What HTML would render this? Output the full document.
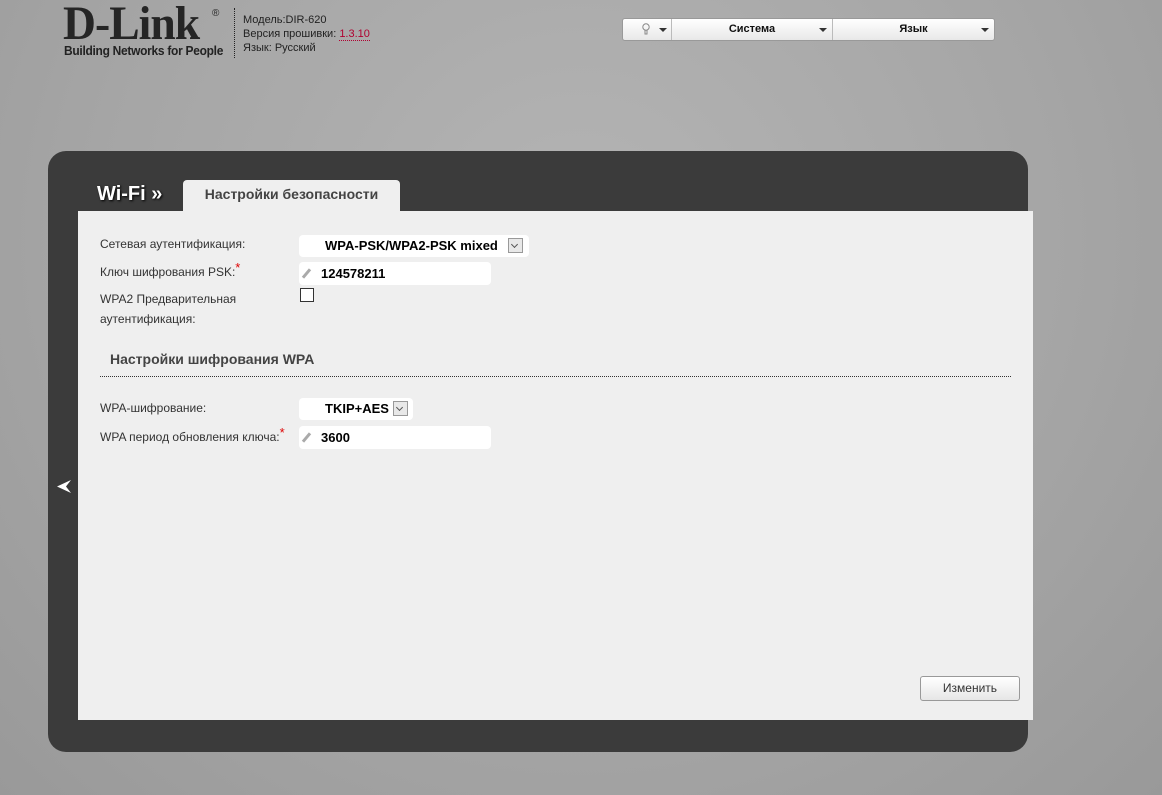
<!DOCTYPE html>
<html><head><meta charset="utf-8"><style>
body{margin:0;width:1162px;height:795px;overflow:hidden;background:radial-gradient(ellipse at 50% 30%,#b4b4b4 0%,#a5a5a5 60%,#999 100%);font-family:"Liberation Sans",sans-serif;position:relative}
.abs{position:absolute}
.logo{left:63px;top:2px;font-family:"Liberation Serif",serif;font-weight:bold;font-size:48px;letter-spacing:-1px;color:#252525;line-height:44px;transform:scaleX(0.95);transform-origin:left}
.tag{left:64px;top:43px;font-size:13px;font-weight:bold;color:#222;letter-spacing:-0.3px;transform:scaleX(0.92);transform-origin:left;white-space:nowrap}
.info{left:243px;top:13px;font-size:11px;color:#222;line-height:14px}
.sep{left:234px;top:8px;height:50px;border-left:1px dotted #222}
.menu{left:622px;top:18px;width:371px;height:21px;background:linear-gradient(#fff,#e8e8e8);border:1px solid #999;border-radius:3px;font-size:11px;font-weight:bold;color:#111}
.menu div{position:absolute;top:0;height:21px;line-height:21px;border-right:1px solid #bbb;text-align:center}
.arr{position:absolute;top:9px;width:0;height:0;border-left:4px solid transparent;border-right:4px solid transparent;border-top:4px solid #333}
.panel{left:48px;top:151px;width:980px;height:601px;background:#3b3b3b;border-radius:18px}
.content{left:78px;top:211px;width:955px;height:509px;background:#efefef}
.tab{left:183px;top:180px;width:217px;height:31px;background:#efefef;border-radius:4px 4px 0 0;font-size:14px;font-weight:bold;color:#444;text-align:center;line-height:29px}
.wifi{left:97px;top:183px;font-size:20px;font-weight:bold;color:#fff;text-shadow:1px 1px 2px #000}
.lbl{font-size:12px;color:#333;line-height:20px}
.inp{background:#fff;border-radius:4px;font-size:13px;font-weight:bold;color:#000}
.sel{background:#fff;border-radius:4px;font-size:13px;font-weight:bold;color:#000;height:22px;line-height:22px}
.dd{position:absolute;top:3px;width:15px;height:15px;border:1px solid #999;background:#e8e8e8;box-sizing:border-box}
.dd:after{content:"";position:absolute;left:3px;top:3px;width:4px;height:4px;border-right:1.5px solid #555;border-bottom:1.5px solid #555;transform:rotate(45deg)}
.pen{position:absolute;left:6px;top:6px;width:3px;height:11px;background:#aaa;transform:rotate(40deg)}
.star{color:#d00;font-size:13px;position:relative;top:-4px}
</style></head><body>
<div class="abs logo">D-Link</div>
<div class="abs" style="left:212px;top:8px;font-size:10px;color:#252525">®</div>
<div class="abs tag">Building Networks for People</div>
<div class="abs sep"></div>
<div class="abs info">Модель:DIR-620<br>Версия прошивки: <span style="color:#b00030;border-bottom:1px dotted #b00030">1.3.10</span><br>Язык: Русский</div>
<div class="abs menu">
<div style="left:0;width:48px"><svg style="position:absolute;left:19px;top:4px" width="8" height="13" viewBox="0 0 8 13"><circle cx="4" cy="4" r="3.2" fill="none" stroke="#888" stroke-width="1"/><path d="M3 7v4h2V7" fill="none" stroke="#888" stroke-width="1"/></svg><span class="arr" style="left:36px"></span></div>
<div style="left:49px;width:160px">Система<span class="arr" style="left:147px"></span></div>
<div style="left:210px;width:161px;border-right:none">Язык<span class="arr" style="left:148px"></span></div>
</div>
<div class="abs panel"></div>
<div class="abs content"></div>
<div class="abs tab">Настройки безопасности</div>
<div class="abs wifi">Wi-Fi »</div>
<svg class="abs" style="left:56px;top:479px" width="16" height="15" viewBox="0 0 16 15"><path d="M15 1L1 7.5L15 14L10 7.5Z" fill="#fff"/></svg>

<div class="abs lbl" style="left:100px;top:234px">Сетевая аутентификация:</div>
<div class="abs sel" style="left:299px;top:235px;width:230px"><span style="position:absolute;left:26px">WPA-PSK/WPA2-PSK mixed</span><span class="dd" style="left:209px"></span></div>
<div class="abs lbl" style="left:100px;top:262px">Ключ шифрования PSK:<span class="star">*</span></div>
<div class="abs inp" style="left:299px;top:262px;width:192px;height:23px;line-height:23px"><span class="pen"></span><span style="position:absolute;left:22px">124578211</span></div>
<div class="abs lbl" style="left:100px;top:289px">WPA2 Предварительная<br>аутентификация:</div>
<div class="abs" style="left:300px;top:288px;width:12px;height:12px;border:1px solid #333;background:#fff"></div>
<div class="abs" style="left:110px;top:351px;font-size:14px;font-weight:bold;color:#444">Настройки шифрования WPA</div>
<div class="abs" style="left:100px;top:376px;width:911px;border-top:1px dotted #333"></div>
<div class="abs lbl" style="left:100px;top:398px">WPA-шифрование:</div>
<div class="abs sel" style="left:299px;top:398px;width:114px"><span style="position:absolute;left:26px">TKIP+AES</span><span class="dd" style="left:94px"></span></div>
<div class="abs lbl" style="left:100px;top:427px">WPA период обновления ключа:<span class="star">*</span></div>
<div class="abs inp" style="left:299px;top:426px;width:192px;height:23px;line-height:23px"><span class="pen"></span><span style="position:absolute;left:22px">3600</span></div>
<div class="abs" style="left:920px;top:676px;width:98px;height:23px;border:1px solid #999;border-radius:3px;background:linear-gradient(#fff,#e6e6e6);font-size:12px;color:#333;text-align:center;line-height:23px">Изменить</div>
</body></html>
